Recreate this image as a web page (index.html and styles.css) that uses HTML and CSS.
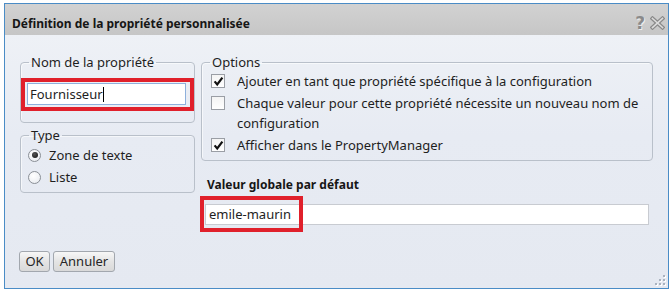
FILE: index.html
```html
<!DOCTYPE html>
<html lang="fr">
<head>
<meta charset="utf-8">
<title>Définition de la propriété personnalisée</title>
<link rel="stylesheet" href="styles.css">
</head>
<body>
<div class="dialog">
  <div class="titlebar">
    <span class="title">Définition de la propriété personnalisée</span>
    <span class="tb-icons">
      <span class="help">?</span>
      <svg class="close" width="15" height="14" viewBox="0 0 15 14">
        <path d="M2.5 2.5 L12.5 11.5 M12.5 2.5 L2.5 11.5" stroke="#8a8a8a" stroke-width="4" stroke-linecap="square"/>
        <path d="M2.5 2.5 L12.5 11.5 M12.5 2.5 L2.5 11.5" stroke="#dcdcdc" stroke-width="1.6" stroke-linecap="square"/>
      </svg>
    </span>
  </div>
  <div class="body">
    <div class="columns">
      <div class="col-left">
        <fieldset class="group group-name">
          <legend>Nom de la propriété</legend>
          <div class="field-wrap">
            <div class="textbox focused">Fournisseur<span class="caret"></span></div>
            <span class="mark mark-name"></span>
          </div>
        </fieldset>
        <fieldset class="group group-type">
          <legend>Type</legend>
          <div class="radio-row"><span class="radio checked"></span>Zone de texte</div>
          <div class="radio-row"><span class="radio"></span>Liste</div>
        </fieldset>
      </div>
      <div class="col-right">
        <fieldset class="group group-options">
          <legend>Options</legend>
          <div class="check-row">
            <span class="check"><svg width="13" height="13" viewBox="0 0 13 13"><path d="M2.6 6.4 L5.2 9.4 L10.4 2.6" fill="none" stroke="#111" stroke-width="2.2"/></svg></span>
            <span class="check-text">Ajouter en tant que propriété spécifique à la configuration</span>
          </div>
          <div class="check-row">
            <span class="check"></span>
            <span class="check-text">Chaque valeur pour cette propriété nécessite un nouveau nom de<br>configuration</span>
          </div>
          <div class="check-row">
            <span class="check"><svg width="13" height="13" viewBox="0 0 13 13"><path d="M2.6 6.4 L5.2 9.4 L10.4 2.6" fill="none" stroke="#111" stroke-width="2.2"/></svg></span>
            <span class="check-text">Afficher dans le PropertyManager</span>
          </div>
        </fieldset>
        <div class="value-label">Valeur globale par défaut</div>
        <div class="field-wrap">
          <div class="textbox wide">emile-maurin</div>
          <span class="mark mark-value"></span>
        </div>
      </div>
    </div>
    <div class="buttons">
      <span class="btn btn-ok">OK</span>
      <span class="btn btn-cancel">Annuler</span>
    </div>
    <svg class="grip" width="11" height="11" viewBox="0 0 11 11">
      <rect x="9" y="1" width="2" height="2" fill="#ffffff"/>
      <rect x="5" y="5" width="2" height="2" fill="#ffffff"/>
      <rect x="9" y="5" width="2" height="2" fill="#ffffff"/>
      <rect x="1" y="9" width="2" height="2" fill="#ffffff"/>
      <rect x="5" y="9" width="2" height="2" fill="#ffffff"/>
      <rect x="9" y="9" width="2" height="2" fill="#ffffff"/>
      <rect x="8" y="0" width="2" height="2" fill="#a9b2bf"/>
      <rect x="4" y="4" width="2" height="2" fill="#a9b2bf"/>
      <rect x="8" y="4" width="2" height="2" fill="#a9b2bf"/>
      <rect x="0" y="8" width="2" height="2" fill="#a9b2bf"/>
      <rect x="4" y="8" width="2" height="2" fill="#a9b2bf"/>
      <rect x="8" y="8" width="2" height="2" fill="#a9b2bf"/>
    </svg>
  </div>
</div>
</body>
</html>
```
FILE: styles.css
```css
html, body {
  margin: 0;
  padding: 0;
  background: #ffffff;
}

body {
  font-family: "Noto Sans", "Open Sans", sans-serif;
  font-size: 13px;
  color: #1e1e1e;
}

.dialog {
  margin: 3px 0 0 4px;
  width: 665px;
  height: 286px;
  box-sizing: border-box;
  border: 1px solid #4a8cc6;
  display: flex;
  flex-direction: column;
}

.titlebar {
  height: 31px;
  flex: none;
  background: linear-gradient(#d2d2d2, #c6c6c6);
  display: flex;
  align-items: center;
  justify-content: space-between;
  padding: 7px 3px 0 7px;
  box-sizing: border-box;
}

.title {
  font-size: 12px;
  font-weight: bold;
  color: #161616;
}

.tb-icons {
  display: flex;
  align-items: center;
  gap: 5px;
}

.help {
  font-family: "DejaVu Sans", sans-serif;
  font-weight: bold;
  font-size: 17px;
  line-height: 17px;
  color: #8a8a8a;
  text-shadow: 1px 1px 0 #eeeeee;
}

.close {
  display: block;
}

.body {
  flex: 1;
  position: relative;
  background: linear-gradient(#eef1f6, #e7ebf3 40%, #e5e9f1);
  padding: 19px 0 0 15px;
}

.columns {
  display: grid;
  grid-template-columns: 175px 452px;
  column-gap: 6px;
  align-items: start;
}

.col-left {
  display: flex;
  flex-direction: column;
  gap: 4px;
}

.group {
  margin: 0;
  border: 1px solid #b9c0ca;
  border-radius: 4px;
  box-shadow: inset 1px 1px 0 rgba(255, 255, 255, 0.6);
  min-width: 0;
}

.group legend {
  padding: 0 2px;
  line-height: 16px;
  font-size: 13px;
  color: #1e1e1e;
}

.group-name {
  padding: 0 8px 17px 6px;
}

.group-name legend {
  margin-left: 2px;
}

.group-type {
  padding: 1px 8px 4px 8px;
}

.group-options {
  padding: 1px 8px 5px 9px;
}

.group-options legend {
  margin-left: -1px;
}

.field-wrap {
  position: relative;
}

.group-name .field-wrap {
  margin-top: 13px;
}

.textbox {
  height: 22px;
  box-sizing: border-box;
  background: #ffffff;
  border: 1px solid #c3c8d0;
  padding: 0 2px;
  line-height: 20px;
  font-size: 13px;
  white-space: nowrap;
}

.textbox.focused {
  border-color: #8eb0dc;
  width: 159px;
}

.caret {
  display: inline-block;
  width: 1px;
  height: 15px;
  background: #000000;
  vertical-align: -3px;
}

.textbox.wide {
  width: 444px;
  height: 21px;
  line-height: 19px;
  padding-left: 3px;
  border-color: #c8cbd1;
}

.mark {
  position: absolute;
  border: 4px solid #e0202b;
  box-sizing: border-box;
  pointer-events: none;
}

.mark-name {
  left: -6px;
  top: -5px;
  width: 173px;
  height: 33px;
}

.mark-value {
  left: -5px;
  top: -8px;
  width: 103px;
  height: 36px;
}

.radio-row {
  display: flex;
  align-items: center;
  height: 22px;
}

.radio {
  width: 13px;
  height: 13px;
  box-sizing: border-box;
  border-radius: 50%;
  border: 1px solid #8a8f96;
  background: radial-gradient(circle at 40% 35%, #ffffff, #e6e9ee);
  margin: 0 8px 0 -1px;
  position: relative;
  flex: none;
}

.radio.checked::after {
  content: "";
  position: absolute;
  left: 2.5px;
  top: 2.5px;
  width: 6px;
  height: 6px;
  border-radius: 50%;
  background: radial-gradient(circle at 40% 35%, #555555, #111111);
}

.check-row {
  display: flex;
  align-items: flex-start;
  line-height: 20px;
  margin-bottom: 2px;
}

.check-row:last-child {
  margin-bottom: 0;
}

.check {
  width: 14px;
  height: 14px;
  box-sizing: border-box;
  border: 1px solid #9a9ea5;
  background: linear-gradient(#f4f4f4, #ffffff);
  margin: 3px 12px 0 0;
  flex: none;
  position: relative;
}

.check svg {
  position: absolute;
  left: 0;
  top: 0;
}

.value-label {
  font-size: 12px;
  font-weight: bold;
  line-height: 16px;
  margin: 16px 0 0 6px;
  color: #161616;
}

.col-right .field-wrap {
  margin: 11px 0 0 4px;
}

.buttons {
  display: flex;
  gap: 3px;
  margin: 26px 0 0 -1px;
}

.btn {
  height: 21px;
  box-sizing: border-box;
  border: 1px solid #a2a7ae;
  border-radius: 3px;
  background: linear-gradient(#f7f7f7, #e4e4e4 50%, #d9d9d9);
  line-height: 19px;
  font-size: 13px;
  color: #262626;
  text-align: center;
}

.btn-ok {
  width: 31px;
}

.btn-cancel {
  width: 62px;
}

.grip {
  position: absolute;
  right: 2px;
  bottom: 2px;
}
```
